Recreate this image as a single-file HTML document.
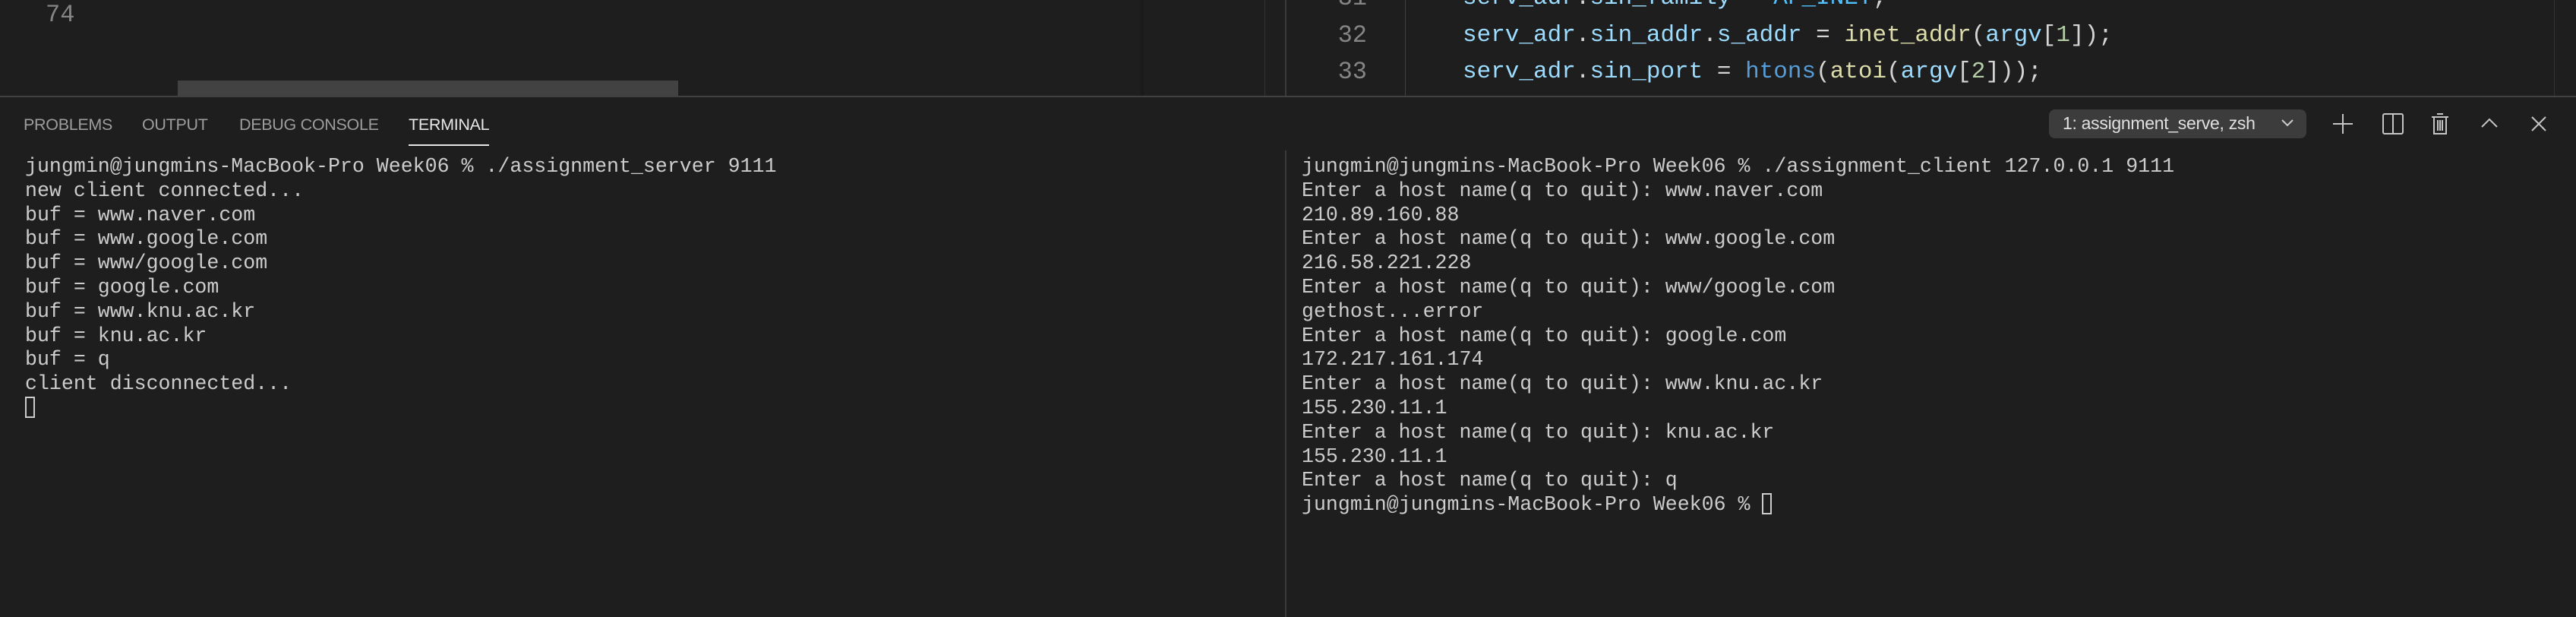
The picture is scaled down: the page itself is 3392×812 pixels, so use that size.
<!DOCTYPE html>
<html><head><meta charset="utf-8">
<style>
html,body{margin:0;padding:0;background:#1e1e1e;}
body{width:3392px;height:812px;position:relative;overflow:hidden;font-family:"Liberation Sans",sans-serif;}
.abs{position:absolute;}
.mono{font-family:"Liberation Mono","DejaVu Sans Mono",monospace;}
.code{font-size:31px;line-height:48px;white-space:pre;color:#d4d4d4;}
.v{color:#9cdcfe}.f{color:#dcdcaa}.m{color:#569cd6}.n{color:#b5cea8}.c{color:#4fc1ff}
.term{font-size:26.6px;line-height:31.8px;white-space:pre;color:#cccccc;}
.tab{font-size:21.5px;color:#9d9d9d;top:152px;letter-spacing:-0.3px}
.cur{display:inline-block;width:13px;height:28px;border:2px solid #cccccc;box-sizing:border-box;vertical-align:-6px;}
</style></head><body>
<div class="abs mono" style="left:60px;top:-4px;font-size:32px;line-height:48px;color:#858585">74</div>
<div class="abs" style="left:234px;top:106px;width:659px;height:20px;background:#424242"></div>
<div class="abs" style="left:1500px;top:0;width:6px;height:126px;background:linear-gradient(90deg,#1e1e1e,#181818)"></div>
<div class="abs" style="left:1665px;top:0;width:1px;height:126px;background:#333"></div>
<div class="abs" style="left:1692px;top:0;width:2px;height:126px;background:#3a3a3a"></div>
<div class="abs mono" style="left:1700px;top:-26px;font-size:32px;line-height:48.5px;color:#858585;width:100px;text-align:right;white-space:pre">31
32
33</div>
<div class="abs" style="left:1850px;top:0;width:1px;height:126px;background:#404040"></div>
<div class="abs mono code" style="left:1926px;top:-26px;line-height:48.5px"><span class="v">serv_adr</span>.<span class="v">sin_family</span> = <span class="c">AF_INET</span>;
<span class="v">serv_adr</span>.<span class="v">sin_addr</span>.<span class="v">s_addr</span> = <span class="f">inet_addr</span>(<span class="v">argv</span>[<span class="n">1</span>]);
<span class="v">serv_adr</span>.<span class="v">sin_port</span> = <span class="m">htons</span>(<span class="f">atoi</span>(<span class="v">argv</span>[<span class="n">2</span>]));</div>
<div class="abs" style="left:3363px;top:0;width:1px;height:126px;background:#333"></div>
<div class="abs" style="left:0;top:126px;width:3392px;height:2px;background:#414141"></div>
<div class="abs tab" style="left:31px">PROBLEMS</div>
<div class="abs tab" style="left:187px">OUTPUT</div>
<div class="abs tab" style="left:315px">DEBUG CONSOLE</div>
<div class="abs tab" style="left:538px;color:#e7e7e7">TERMINAL</div>
<div class="abs" style="left:538px;top:190px;width:106px;height:2px;background:#e7e7e7"></div>
<div class="abs" style="left:2698px;top:144px;width:339px;height:38px;background:#3c3c3c;border-radius:8px"></div>
<div class="abs" style="left:2716px;top:149px;font-size:23px;color:#e0e0e0;letter-spacing:-0.3px">1: assignment_serve, zsh</div>
<svg class="abs" style="left:3003px;top:154px" width="18" height="16" viewBox="0 0 18 16"><path d="M2 4 L9 11 L16 4" fill="none" stroke="#cccccc" stroke-width="2"/></svg>
<svg class="abs" style="left:3070px;top:148px" width="30" height="30" viewBox="0 0 30 30"><path d="M15 2V28M2 15H28" stroke="#c5c5c5" stroke-width="2"/></svg>
<svg class="abs" style="left:3137px;top:149px" width="28" height="28" viewBox="0 0 28 28"><rect x="1" y="1" width="26" height="26" rx="2" fill="none" stroke="#c5c5c5" stroke-width="2"/><path d="M14 1V27" stroke="#c5c5c5" stroke-width="2"/></svg>
<svg class="abs" style="left:3201px;top:147px" width="24" height="32" viewBox="0 0 24 32"><path d="M8 3H16M1 7H23M4 7V29H20V7M9 11V25M12 11V25M15 11V25" fill="none" stroke="#c5c5c5" stroke-width="2"/></svg>
<svg class="abs" style="left:3266px;top:154px" width="24" height="16" viewBox="0 0 24 16"><path d="M2 13 L12 3 L22 13" fill="none" stroke="#c5c5c5" stroke-width="2"/></svg>
<svg class="abs" style="left:3332px;top:152px" width="22" height="22" viewBox="0 0 22 22"><path d="M2 2L20 20M20 2L2 20" stroke="#c5c5c5" stroke-width="2"/></svg>
<div class="abs mono term" style="left:33px;top:204px">jungmin@jungmins-MacBook-Pro Week06 % ./assignment_server 9111
new client connected...
buf = www.naver.com
buf = www.google.com
buf = www/google.com
buf = google.com
buf = www.knu.ac.kr
buf = knu.ac.kr
buf = q
client disconnected...
<span class="cur"></span></div>
<div class="abs" style="left:1692px;top:198px;width:2px;height:614px;background:#3a3a3a"></div>
<div class="abs mono term" style="left:1714px;top:204px">jungmin@jungmins-MacBook-Pro Week06 % ./assignment_client 127.0.0.1 9111
Enter a host name(q to quit): www.naver.com
210.89.160.88
Enter a host name(q to quit): www.google.com
216.58.221.228
Enter a host name(q to quit): www/google.com
gethost...error
Enter a host name(q to quit): google.com
172.217.161.174
Enter a host name(q to quit): www.knu.ac.kr
155.230.11.1
Enter a host name(q to quit): knu.ac.kr
155.230.11.1
Enter a host name(q to quit): q
jungmin@jungmins-MacBook-Pro Week06 % <span class="cur"></span></div>
</body></html>
